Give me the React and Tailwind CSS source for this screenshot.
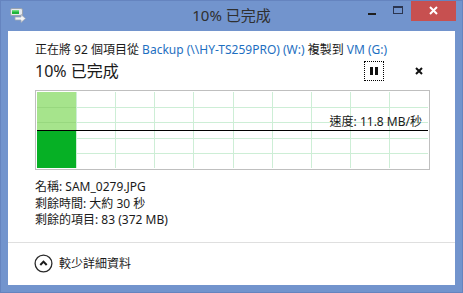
import React from "react";

const FONT = "font-['Noto_Sans','Noto_Sans_CJK_TC',sans-serif]";

function AppIcon() {
  return (
    <svg width="16" height="15" viewBox="0 0 16 15">
      <rect x="0.5" y="0.5" width="12" height="7" rx="1.5" fill="#e6e9ee" stroke="#9aa3ae" />
      <rect x="2" y="2" width="7" height="4" fill="#1fb43a" />
      <rect x="2" y="2" width="7" height="1.5" fill="#6fe07f" />
      <path d="M5 9 h6 v-2.5 l4.5 4 l-4.5 4 v-2.5 h-6 z" fill="#f3f4f6" stroke="#a0a7b2" strokeWidth="0.8" />
    </svg>
  );
}

function Chart() {
  const w = 391;
  const h = 76;
  const vx = [1, 2, 3, 4, 5, 6, 7, 8, 9].map((k) => Math.round(39.1 * k) + 0.5);
  const hy = [1, 2, 3, 4].map((k) => Math.round(15.2 * k) + 0.5);
  return (
    <svg width={w} height={h} className="block">
      <rect x="0" y="0" width={w} height={h} fill="#ffffff" />
      {vx.map((x) => (
        <line key={"v" + x} x1={x} y1="0" x2={x} y2={h} stroke="#cdeed6" strokeWidth="1" />
      ))}
      {hy.map((y) => (
        <line key={"h" + y} x1="0" y1={y} x2={w} y2={y} stroke="#cdeed6" strokeWidth="1" />
      ))}
      <rect x="0" y="0" width="39" height="38" fill="#a6e48c" />
      <rect x="0" y="38" width="39" height="38" fill="#06b025" />
      <line x1="0" y1="15.5" x2="39" y2="15.5" stroke="#98d87f" strokeWidth="1" />
      <line x1="0" y1="30.5" x2="39" y2="30.5" stroke="#98d87f" strokeWidth="1" />
      <line x1="0" y1="38.5" x2={w} y2="38.5" stroke="#000000" strokeWidth="1" />
    </svg>
  );
}

export default function App() {
  return (
    <div
      className={`${FONT} w-[463px] h-[293px] bg-[#7294cd] border border-[#6584bf] flex flex-col overflow-hidden`}
    >
      {/* Title bar */}
      <div className="relative h-[30px] flex items-center justify-center shrink-0">
        <div className="absolute left-[9px] top-[7px]">
          <AppIcon />
        </div>
        <div className="text-[15px] leading-none text-[#2f2f2f] -mt-[1px]">10% 已完成</div>
        <div className="absolute right-[6px] top-[-1px] flex items-start">
          <div className="w-[26px] h-[21px] flex items-center justify-center">
            <div className="w-[8px] h-[2px] bg-[#1f1f1f] mt-[7px]" />
          </div>
          <div className="w-[26px] h-[21px] flex items-center justify-center">
            <div className="w-[10px] h-[8px] border border-[#2b3550] border-t-2 -mt-[2px]" />
          </div>
          <div className="w-[45px] h-[21px] bg-[#c75050] flex items-center justify-center">
            <svg width="9" height="9" viewBox="0 0 9 9">
              <path d="M1 1 L8 8 M8 1 L1 8" stroke="#ffffff" strokeWidth="2" />
            </svg>
          </div>
        </div>
      </div>

      {/* Client area */}
      <div className="mx-[7px] mb-[7px] flex-1 bg-white flex flex-col">
        <div className="pl-[27px] pr-[26px] pt-[11px]">
          <div className="text-[12px] leading-[16px] text-[#1a1a1a] whitespace-nowrap">
            正在將 92 個項目從 <span className="text-[#1e6fc1]">Backup (\\HY-TS259PRO) (W:)</span> 複製到{" "}
            <span className="text-[#1e6fc1]">VM (G:)</span>
          </div>
          <div className="h-[24px] mt-[1px] flex items-center">
            <div className="flex-1 text-[16px] leading-none text-[#1a1a1a]">10% 已完成</div>
            <div className="w-[20px] h-[20px] border border-dotted border-black flex items-center justify-center gap-[2px] mr-[31px]">
              <div className="w-[3px] h-[8px] bg-[#111]" />
              <div className="w-[3px] h-[8px] bg-[#111]" />
            </div>
            <svg width="8" height="8" viewBox="0 0 8 8" className="mr-[6px]">
              <path d="M1 1 L7 7 M7 1 L1 7" stroke="#111" strokeWidth="2" />
            </svg>
          </div>
          <div className="relative mt-[7px] w-[395px] border border-[#bfbfbf] p-[1px]">
            <Chart />
            <div className="absolute right-[7px] top-[23px] text-[12px] leading-[16px] text-[#1a1a1a] whitespace-nowrap">
              速度: 11.8 MB/秒
            </div>
          </div>
          <div className="mt-[9px] text-[12px] leading-[16.6px] text-[#1a1a1a]">
            <div>名稱: SAM_0279.JPG</div>
            <div>剩餘時間: 大約 30 秒</div>
            <div>剩餘的項目: 83 (372 MB)</div>
          </div>
        </div>
        <div className="mt-[13px] border-t border-[#dfdfdf] flex-1 flex items-center pl-[26px]">
          <svg width="19" height="19" viewBox="0 0 19 19">
            <circle cx="9.5" cy="9.5" r="8.4" fill="none" stroke="#2a2a2a" strokeWidth="1.3" />
            <path d="M6.3 11 L9.5 7.6 L12.7 11" fill="none" stroke="#1a1a1a" strokeWidth="2" />
          </svg>
          <div className="ml-[6px] text-[12px] leading-none text-[#1a1a1a]">較少詳細資料</div>
        </div>
      </div>
    </div>
  );
}
